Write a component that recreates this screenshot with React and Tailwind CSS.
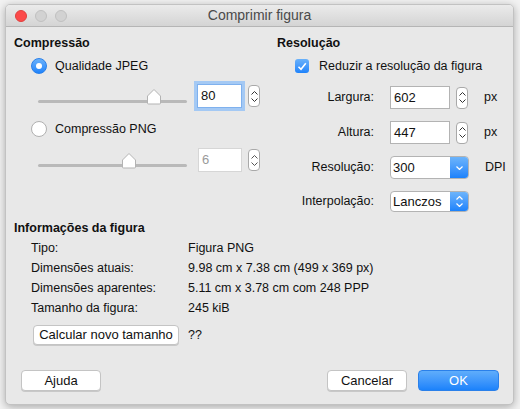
import React from "react";

const Stepper = ({ disabled }) => (
  <div className="w-[12px] h-[22px] rounded-[4px] bg-white border border-[#a9a9a9] flex flex-col items-center justify-center gap-[3px]">
    <svg width="7" height="4" viewBox="0 0 7 4">
      <path d="M0.5 3.5 L3.5 0.5 L6.5 3.5" fill="none" stroke={disabled ? "#555" : "#333"} strokeWidth="1" />
    </svg>
    <svg width="7" height="4" viewBox="0 0 7 4">
      <path d="M0.5 0.5 L3.5 3.5 L6.5 0.5" fill="none" stroke={disabled ? "#555" : "#333"} strokeWidth="1" />
    </svg>
  </div>
);

const Slider = ({ pos }) => (
  <div className="relative w-[149px] h-[24px]">
    <div className="absolute left-0 right-0 top-[16px] h-[3px] rounded-full bg-[#b9b9b9]" />
    <svg className="absolute top-[4px]" style={{ left: pos }} width="16" height="17" viewBox="0 0 16 17">
      <path d="M1.5 15 L1.5 8 L8 1.5 L14.5 8 L14.5 15 Q14.5 16 13.5 16 L2.5 16 Q1.5 16 1.5 15 Z" fill="#fff" stroke="#b3b3b3" strokeWidth="1" />
    </svg>
  </div>
);

const Radio = ({ on }) =>
  on ? (
    <div className="w-[16px] h-[16px] rounded-full bg-gradient-to-b from-[#69b1fa] to-[#1d83fb] border border-[#2a80ea] flex items-center justify-center">
      <div className="w-[6px] h-[6px] rounded-full bg-white" />
    </div>
  ) : (
    <div className="w-[16px] h-[16px] rounded-full bg-white border border-[#b0b0b0]" />
  );

const BlueSelect = ({ value, double, h }) => (
  <div className={`w-[79px] ${h} rounded-[4px] bg-white border border-[#b3b3b3] flex overflow-hidden`}>
    <div className="flex-1 pl-[2px] flex items-center text-[13px]">{value}</div>
    <div className="w-[18px] bg-gradient-to-b from-[#6cb4fb] to-[#1b82fb] flex flex-col items-center justify-center gap-[3px]">
      {double && (
        <svg width="7" height="4" viewBox="0 0 7 4">
          <path d="M0.5 3.5 L3.5 0.5 L6.5 3.5" fill="none" stroke="#fff" strokeWidth="1.2" />
        </svg>
      )}
      <svg width="7" height="4" viewBox="0 0 7 4">
        <path d="M0.5 0.5 L3.5 3.5 L6.5 0.5" fill="none" stroke="#fff" strokeWidth="1.2" />
      </svg>
    </div>
  </div>
);

const Button = ({ children, w, primary }) => (
  <div
    className={
      primary
        ? `${w} h-[21px] rounded-[4px] bg-gradient-to-b from-[#5fadfb] to-[#1a82fb] border border-[#2a80ea] text-white flex items-center justify-center text-[13px]`
        : `${w} h-[21px] rounded-[4px] bg-white border border-[#c4c4c4] shadow-[0_1px_0_#c8c8c8] flex items-center justify-center text-[13px]`
    }
  >
    {children}
  </div>
);

const ResRow = ({ label, children }) => (
  <div className="flex items-center mt-[12px] whitespace-nowrap">
    <div className="w-[97px] shrink-0 text-right">{label}</div>
    <div className="ml-[16px] flex items-center">{children}</div>
  </div>
);

const NumBox = ({ value }) => (
  <div className="w-[60px] h-[23px] bg-white border border-[#b3b3b3] flex items-center pl-[3px] text-[13px]">
    {value}
  </div>
);

export default function App() {
  const info = [
    ["Tipo:", "Figura PNG"],
    ["Dimensões atuais:", "9.98 cm x 7.38 cm (499 x 369 px)"],
    ["Dimensões aparentes:", "5.11 cm x 3.78 cm com 248 PPP"],
    ["Tamanho da figura:", "245 kiB"],
  ];

  return (
    <div
      className="w-[520px] h-[409px] bg-[#f2f2f2] pl-[5px] pt-[4px] text-[12.5px] text-[#111]"
      style={{ fontFamily: '"Liberation Sans", Arial, sans-serif' }}
    >
      <div className="w-[509px] h-[401px] rounded-[5px] bg-[#e8e8e8] border border-[#c2c2c2] shadow-[0_2px_8px_rgba(0,0,0,0.3)] overflow-hidden flex flex-col">
        {/* TITLE BAR */}
        <div className="relative h-[22px] shrink-0 bg-gradient-to-b from-[#ebebeb] to-[#d4d4d4] border-b border-[#b5b5b5] flex items-center">
          <div className="flex items-center gap-[8px] pl-[9px]">
            <div className="w-[12px] h-[12px] rounded-full bg-[#fc4a4a] border border-[#e0403e]" />
            <div className="w-[12px] h-[12px] rounded-full bg-[#d2d2d2] border border-[#c0c0c0]" />
            <div className="w-[12px] h-[12px] rounded-full bg-[#d2d2d2] border border-[#c0c0c0]" />
          </div>
          <div className="absolute inset-0 flex items-center justify-center text-[14px] text-[#4a4a4a]">
            Comprimir figura
          </div>
        </div>

        {/* CONTENT */}
        <div className="pl-[8px] pr-[14px] flex flex-col">
          <div className="flex">
            {/* COMPRESSÃO */}
            <div className="w-[263px] shrink-0 flex flex-col">
              <div className="mt-[8px] h-[16px] leading-[16px] font-bold">Compressão</div>
              <div className="mt-[7px] h-[16px] flex items-center pl-[17px]">
                <Radio on />
                <span className="ml-[8px]">Qualidade JPEG</span>
              </div>
              <div className="mt-[10px] flex items-center pl-[24px]">
                <Slider pos={108} />
                <div className="ml-[10px] w-[45px] h-[24px] bg-white border border-[#7fb1ee] shadow-[0_0_0_3px_#a4c9f4] flex items-center pl-[3px] text-[13px]">
                  80
                </div>
                <div className="ml-[6px]"><Stepper /></div>
              </div>
              <div className="mt-[13px] h-[16px] flex items-center pl-[17px]">
                <Radio />
                <span className="ml-[8px]">Compressão PNG</span>
              </div>
              <div className="mt-[11px] flex items-center pl-[24px]">
                <Slider pos={83} />
                <div className="ml-[11px] w-[44px] h-[24px] bg-white border border-[#d6d6d6] flex items-center pl-[3px] text-[13px] text-[#9a9a9a]">
                  6
                </div>
                <div className="ml-[6px]"><Stepper disabled /></div>
              </div>
            </div>

            {/* RESOLUÇÃO */}
            <div className="flex-1 min-w-0 flex flex-col">
              <div className="mt-[8px] h-[16px] leading-[16px] font-bold">Resolução</div>
              <div className="mt-[7px] h-[16px] flex items-center pl-[18px] whitespace-nowrap">
                <div className="w-[14px] h-[14px] shrink-0 rounded-[3px] bg-gradient-to-b from-[#69b1fa] to-[#1d83fb] flex items-center justify-center">
                  <svg width="10" height="9" viewBox="0 0 10 9">
                    <path d="M1.5 4.8 L4 7.3 L8.8 1.2" fill="none" stroke="#fff" strokeWidth="1.6" />
                  </svg>
                </div>
                <span className="ml-[10px]">Reduzir a resolução da figura</span>
              </div>
              <ResRow label="Largura:">
                <NumBox value="602" />
                <div className="ml-[6px]"><Stepper /></div>
                <span className="ml-[16px]">px</span>
              </ResRow>
              <ResRow label="Altura:">
                <NumBox value="447" />
                <div className="ml-[6px]"><Stepper /></div>
                <span className="ml-[16px]">px</span>
              </ResRow>
              <ResRow label="Resolução:">
                <BlueSelect value="300" h="h-[23px]" />
                <span className="ml-[16px]">DPI</span>
              </ResRow>
              <ResRow label="Interpolação:">
                <BlueSelect value="Lanczos" double h="h-[21px]" />
              </ResRow>
            </div>
          </div>

          {/* INFORMAÇÕES */}
          <div className="mt-[8px] h-[16px] leading-[16px] font-bold">Informações da figura</div>
          <div className="mt-[4px] flex flex-col gap-[4px] pl-[17px]">
            {info.map(([k, v]) => (
              <div key={k} className="h-[16px] leading-[16px] flex">
                <div className="w-[157px]">{k}</div>
                <div>{v}</div>
              </div>
            ))}
          </div>
          <div className="mt-[9px] flex items-center pl-[19px]">
            <div className="w-[146px] h-[20px] rounded-[4px] bg-white border border-[#c4c4c4] shadow-[0_1px_0_#c8c8c8] flex items-center justify-center text-[13px]">
              Calcular novo tamanho
            </div>
            <span className="ml-[9px]">??</span>
          </div>

          {/* BUTTONS */}
          <div className="mt-[25px] flex items-center pl-[7px]">
            <Button w="w-[80px]">Ajuda</Button>
            <div className="flex-1" />
            <Button w="w-[80px]">Cancelar</Button>
            <div className="ml-[11px]">
              <Button w="w-[81px]" primary>OK</Button>
            </div>
          </div>
        </div>
      </div>
    </div>
  );
}
